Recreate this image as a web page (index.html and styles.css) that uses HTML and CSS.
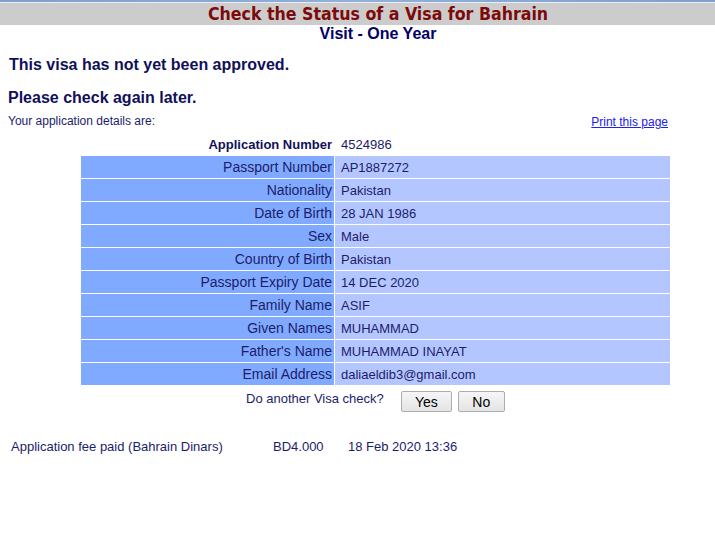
FILE: index.html
```html
<!DOCTYPE html>
<html>
<head>
<meta charset="utf-8">
<title>Check the Status of a Visa for Bahrain</title>
<link rel="stylesheet" href="styles.css">
</head>
<body>
<div class="topstrip"></div>
<div class="titlebar"><div class="title">Check the Status of a Visa for Bahrain</div></div>
<div class="subtitle">Visit - One Year</div>

<h1 class="status">This visa has not yet been approved.</h1>
<h2 class="again">Please check again later.</h2>

<div class="detailsline">
  <span class="intro">Your application details are:</span>
  <a class="print" href="#">Print this page</a>
</div>

<table class="details">
  <tr class="plain"><th>Application Number</th><td>4524986</td></tr>
  <tr><th>Passport Number</th><td>AP1887272</td></tr>
  <tr><th>Nationality</th><td>Pakistan</td></tr>
  <tr><th>Date of Birth</th><td>28 JAN 1986</td></tr>
  <tr><th>Sex</th><td>Male</td></tr>
  <tr><th>Country of Birth</th><td>Pakistan</td></tr>
  <tr><th>Passport Expiry Date</th><td>14 DEC 2020</td></tr>
  <tr><th>Family Name</th><td>ASIF</td></tr>
  <tr><th>Given Names</th><td>MUHAMMAD</td></tr>
  <tr><th>Father's Name</th><td>MUHAMMAD INAYAT</td></tr>
  <tr><th>Email Address</th><td>daliaeldib3@gmail.com</td></tr>
</table>

<div class="another">
  <span class="question">Do another Visa check?</span>
  <button class="btn btn-yes">Yes</button>
  <button class="btn btn-no">No</button>
</div>

<div class="fee">
  <span class="fee-label">Application fee paid (Bahrain Dinars)</span>
  <span class="fee-amount">BD4.000</span>
  <span class="fee-date">18 Feb 2020 13:36</span>
</div>
</body>
</html>
```

FILE: styles.css
```css
html, body {
  margin: 0;
  padding: 0;
  background: #ffffff;
}
body {
  font-family: "Liberation Sans", Arial, sans-serif;
  color: #1c1c6c;
  width: 715px;
  overflow: hidden;
}
.topstrip {
  height: 2px;
  background: linear-gradient(to right, #7f9fcf, #93b0dc 50%, #7f9fcf);
  border-bottom: 1px solid #e8eef6;
}
.titlebar {
  height: 22px;
  background: #cccccc;
  padding-left: 41px;
  text-align: center;
}
.title {
  font-family: "DejaVu Sans Condensed", "DejaVu Sans", sans-serif;
  font-stretch: condensed;
  font-weight: bold;
  font-size: 17.6px;
  line-height: 22px;
  color: #7d0a0a;
}
.subtitle {
  padding-left: 41px;
  text-align: center;
  font-weight: bold;
  font-size: 16px;
  line-height: 17px;
  color: #000066;
}
.status {
  margin: 0;
  padding: 14px 0 0 9px;
  font-size: 16px;
  line-height: 18px;
  color: #10105a;
}
.again {
  margin: 0;
  padding: 15px 0 0 8px;
  font-size: 16px;
  line-height: 18px;
  color: #10105a;
}
.detailsline {
  display: flex;
  justify-content: space-between;
  padding: 7px 47px 0 8px;
  font-size: 12px;
  line-height: 14px;
}
.intro {
  color: #1c1c6c;
}
.print {
  color: #2020f0;
  text-decoration: underline;
  position: relative;
  top: 1px;
}
.details {
  margin: 4px 0 0 80px;
  border-collapse: separate;
  border-spacing: 1px;
  font-size: 13px;
  width: 591px;
}
.details tr {
  height: 22px;
}
.details th {
  width: 251px;
  text-align: right;
  font-weight: normal;
  font-size: 14px;
  padding: 0 2px 0 0;
  background: #80aaff;
  color: #1c1c6c;
}
.details td {
  padding: 0 0 0 6px;
  background: #b4c6ff;
  color: #1c1c6c;
  font-size: 13px;
}
.details tr.plain th {
  background: transparent;
  font-weight: bold;
  font-size: 13px;
  color: #10105a;
}
.details tr.plain td {
  background: transparent;
  color: #1c1c6c;
}
.another {
  display: flex;
  align-items: flex-start;
  margin: 4px 0 0 246px;
  font-size: 13px;
}
.question {
  line-height: 14px;
  margin-top: 2px;
  margin-right: 17px;
}
.btn {
  font-family: "Liberation Sans", Arial, sans-serif;
  font-size: 14px;
  color: #000000;
  height: 21px;
  padding: 0;
  border: 1px solid #adadad;
  border-radius: 2px;
  background: linear-gradient(#f6f6f6, #e4e4e4);
  margin-top: 1px;
}
.btn-yes {
  width: 51px;
}
.btn-no {
  width: 47px;
  margin-left: 6px;
}
.fee {
  display: flex;
  margin: 27px 0 0 11px;
  font-size: 13px;
  line-height: 15px;
}
.fee-label {
  width: 262px;
}
.fee-amount {
  width: 75px;
}
```
